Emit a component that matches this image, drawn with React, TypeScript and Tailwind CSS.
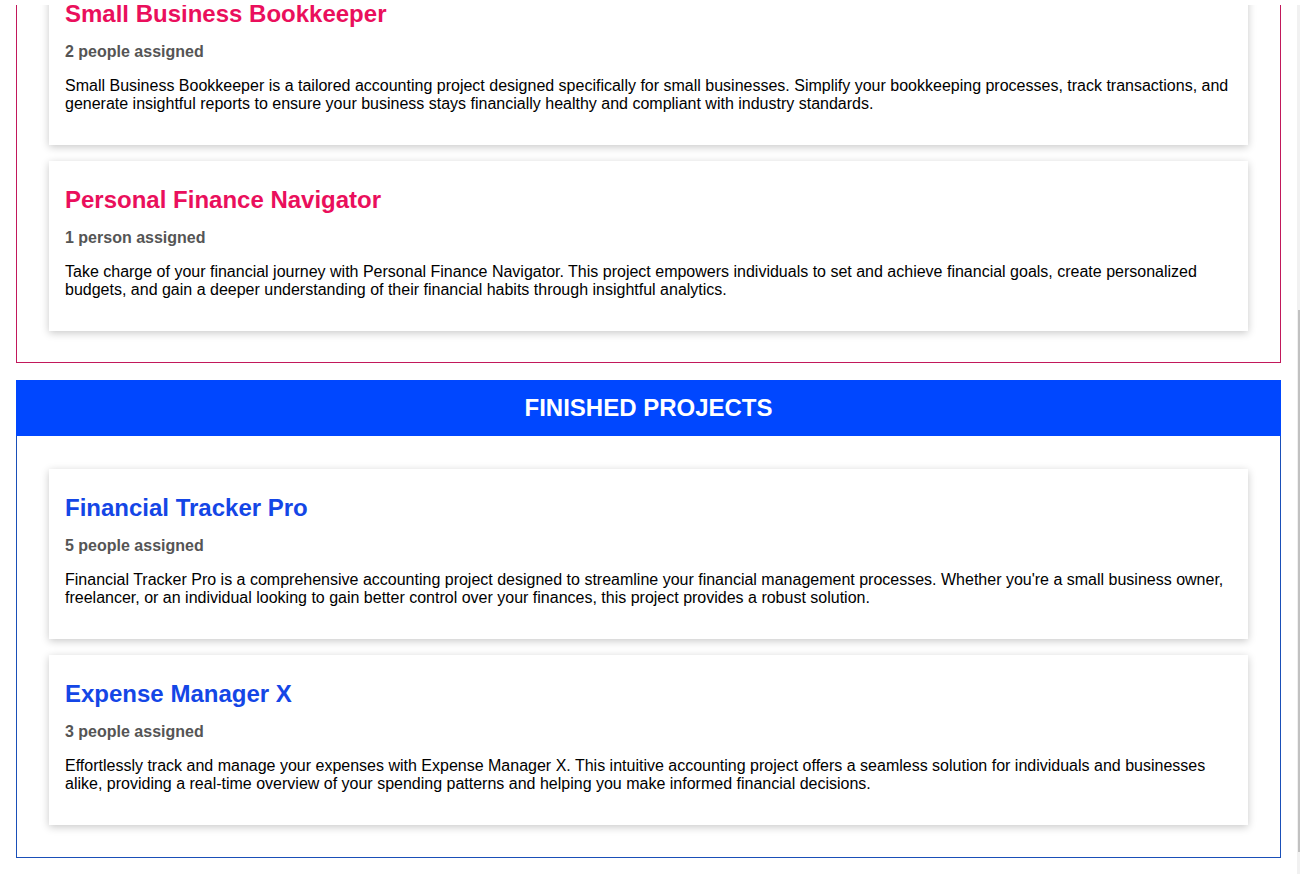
const ongoing = [
  {
    title: "Small Business Bookkeeper",
    assigned: "2 people assigned",
    desc: "Small Business Bookkeeper is a tailored accounting project designed specifically for small businesses. Simplify your bookkeeping processes, track transactions, and generate insightful reports to ensure your business stays financially healthy and compliant with industry standards.",
  },
  {
    title: "Personal Finance Navigator",
    assigned: "1 person assigned",
    desc: "Take charge of your financial journey with Personal Finance Navigator. This project empowers individuals to set and achieve financial goals, create personalized budgets, and gain a deeper understanding of their financial habits through insightful analytics.",
  },
];

const finished = [
  {
    title: "Financial Tracker Pro",
    assigned: "5 people assigned",
    desc: "Financial Tracker Pro is a comprehensive accounting project designed to streamline your financial management processes. Whether you're a small business owner, freelancer, or an individual looking to gain better control over your finances, this project provides a robust solution.",
  },
  {
    title: "Expense Manager X",
    assigned: "3 people assigned",
    desc: "Effortlessly track and manage your expenses with Expense Manager X. This intuitive accounting project offers a seamless solution for individuals and businesses alike, providing a real-time overview of your spending patterns and helping you make informed financial decisions.",
  },
];

type Project = { title: string; assigned: string; desc: string };

function ProjectCard({ project, titleClass }: { project: Project; titleClass: string }) {
  return (
    <div className="bg-white px-4 pt-[25px] pb-4 shadow-[0_2px_8px_rgba(0,0,0,0.22)]">
      <h2 className={`text-[24px] font-bold leading-[27px] mb-4 ${titleClass}`}>
        {project.title}
      </h2>
      <p className="text-[16px] font-bold leading-[18px] text-[#555] mb-4">{project.assigned}</p>
      <p className="text-[16px] leading-[18px] text-black mb-4">{project.desc}</p>
    </div>
  );
}

export default function App() {
  return (
    <div className="h-[874px] overflow-hidden bg-white flex flex-col font-['Liberation_Sans',Arial,sans-serif]">
      <div className="h-[5px] shrink-0 bg-white" />
      <div className="flex flex-1 min-h-0">
        <main className="flex-1 overflow-hidden">
          <div className="-mt-[63px] px-4 flex flex-col gap-[17px]">
            <section className="border border-[#c2185b] px-8 pt-8 pb-[31px] flex flex-col gap-4">
              {ongoing.map((p) => (
                <ProjectCard key={p.title} project={p} titleClass="text-[#ea0f5c]" />
              ))}
            </section>

            <section>
              <div className="h-14 bg-[#0047ff] flex items-center justify-center">
                <h1 className="text-[24px] font-bold text-white">FINISHED PROJECTS</h1>
              </div>
              <div className="border-x border-b border-[#1a4fb8] px-8 pt-[33px] pb-8 flex flex-col gap-4">
                {finished.map((p) => (
                  <ProjectCard key={p.title} project={p} titleClass="text-[#1446e6]" />
                ))}
              </div>
            </section>
          </div>
        </main>
        <div className="w-[3px] shrink-0 bg-[#f1f1f1] flex justify-end">
          <div className="mt-[305px] h-[542px] w-[2px] bg-[#c1c1c1]" />
        </div>
      </div>
    </div>
  );
}
